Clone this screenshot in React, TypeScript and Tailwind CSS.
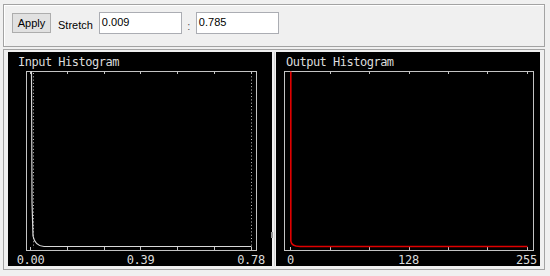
import React from "react";

const mono = { fontFamily: '"DejaVu Sans Mono", monospace' };

function Axes({ ticks }: { ticks: number[] }) {
  return (
    <g stroke="#c4c4c4" strokeWidth={1} shapeRendering="crispEdges">
      {ticks.map((t) => (
        <line key={"t" + t} x1={t} y1={19} x2={t} y2={22} />
      ))}
      {ticks.map((t) => (
        <line key={"b" + t} x1={t} y1={198} x2={t} y2={195} />
      ))}
    </g>
  );
}

function InputPlot() {
  const ticks = [22.5, 59.5, 96.5, 132.5, 169.5, 206.5, 243.5];
  return (
    <svg width={264} height={214} className="block">
      <text x={10} y={14} fill="#dcdcdc" fontSize={12} letterSpacing={-0.5} style={mono}>
        Input Histogram
      </text>
      <rect x={18.5} y={19.5} width={230} height={178.5} fill="none" stroke="#c4c4c4" strokeWidth={1} shapeRendering="crispEdges" />
      <Axes ticks={ticks} />
      <line x1={25.5} y1={21} x2={25.5} y2={196} stroke="#bdbdbd" strokeDasharray="1 2.3" />
      <line x1={243.5} y1={21} x2={243.5} y2={196} stroke="#bdbdbd" strokeDasharray="1 2.3" />
      <path
        d="M23.5 19.5 L24 150 L25 184 Q27 194 36 194.5 L243.5 194.5"
        fill="none"
        stroke="#d8d8d8"
        strokeWidth={1.2}
      />
      <g fill="#dcdcdc" fontSize={12} style={mono} textAnchor="middle" letterSpacing={-0.3}>
        <text x={22.5} y={211.5}>0.00</text>
        <text x={132.5} y={211.5}>0.39</text>
        <text x={243} y={211.5}>0.78</text>
      </g>
    </svg>
  );
}

function OutputPlot() {
  const ticks = [14.5, 54, 93.5, 133, 172.5, 211.5, 251.5];
  return (
    <svg width={264} height={214} className="block">
      <text x={10} y={14} fill="#dcdcdc" fontSize={12} letterSpacing={-0.5} style={mono}>
        Output Histogram
      </text>
      <rect x={8.5} y={19.5} width={249} height={178.5} fill="none" stroke="#c4c4c4" strokeWidth={1} shapeRendering="crispEdges" />
      <Axes ticks={ticks} />
      <path
        d="M14.8 19.5 L14.8 189 Q15.5 194.5 24 194.5 L251.5 194.5"
        fill="none"
        stroke="#e00000"
        strokeWidth={1.6}
      />
      <g fill="#dcdcdc" fontSize={12} style={mono} textAnchor="middle" letterSpacing={-0.3}>
        <text x={14.5} y={211.5}>0</text>
        <text x={132.5} y={211.5}>128</text>
        <text x={250.5} y={211.5}>255</text>
      </g>
    </svg>
  );
}

export default function App() {
  const ui = { fontFamily: '"Liberation Sans", Arial, sans-serif' };
  return (
    <div className="w-[550px] h-[276px] bg-[#f0f0f0] pt-[4px] pl-[3px] overflow-hidden" style={ui}>
      <div className="w-[542px] h-[43px] border border-[#a3a3a3] bg-[#f0f0f0] shadow-[inset_1px_1px_0_#ffffff]">
        <div className="flex items-center h-[22px] mt-[7px] ml-[8px] text-[11px] text-black">
          <div className="w-[39px] h-[20px] bg-[#e1e1e1] border border-[#adadad] flex items-center justify-center leading-none">
            Apply
          </div>
          <div className="ml-[7px] mt-[4px] leading-none">Stretch</div>
          <div className="ml-[6px] w-[83px] h-[22px] bg-white border border-[#abadb3] pl-[2px] pt-[2px] leading-[14px]">
            0.009
          </div>
          <div className="w-[14px] text-center mt-[6px] leading-none text-[#555]">:</div>
          <div className="w-[83px] h-[22px] bg-white border border-[#abadb3] pl-[2px] pt-[2px] leading-[14px]">
            0.785
          </div>
        </div>
      </div>
      <div className="mt-[2px] w-[542px] h-[221px] border border-[#a3a3a3] flex pl-[4px] pt-[2px]">
        <div className="relative w-[264px] h-[214px] bg-black">
          <InputPlot />
          <div className="absolute right-[-1px] top-[180px] w-[2px] h-[6px] bg-[#9a9a9a]" />
        </div>
        <div className="w-[4px] h-[214px] flex justify-center">
          <div className="w-[1px] h-full bg-[#d4d4d4]" />
        </div>
        <div className="w-[264px] h-[214px] bg-black">
          <OutputPlot />
        </div>
      </div>
    </div>
  );
}
